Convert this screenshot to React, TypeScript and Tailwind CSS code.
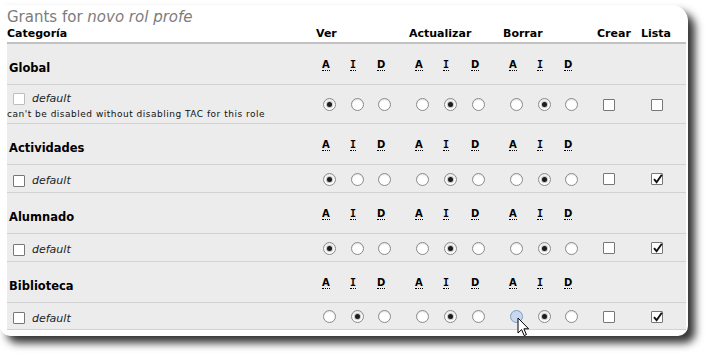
import React from "react";

const cols =
  "grid grid-cols-[309px_28px_27px_38px_28px_28px_38px_28px_27px_39px_44px_45px]";

function Radio({ checked, hover }: { checked?: boolean; hover?: boolean }) {
  return (
    <span
      className={
        "flex w-[13px] h-[13px] rounded-full border items-center justify-center " +
        (hover
          ? "border-[#7f9cc4] bg-[#c8d9ef]"
          : "border-[#8a8a8a] bg-white shadow-[inset_0_1px_1px_rgba(0,0,0,0.12)]")
      }
    >
      {checked && <span className="block w-[5px] h-[5px] rounded-full bg-[#1c1c1c] shadow-[0_0_1px_1px_rgba(0,0,0,0.25)]" />}
    </span>
  );
}

function Check({ checked, disabled }: { checked?: boolean; disabled?: boolean }) {
  return (
    <span
      className={
        "relative block w-[12px] h-[12px] rounded-[1px] border bg-white " +
        (disabled ? "border-[#bdbdbd]" : "border-[#777777]")
      }
    >
      {checked && (
        <svg className="absolute left-[0px] top-[-1px]" width="12" height="12" viewBox="0 0 12 12">
          <path d="M2 6.2 L4.6 9.2 L9.8 1.8" fill="none" stroke="#111" strokeWidth="1.9" />
        </svg>
      )}
    </span>
  );
}

function Letter({ c }: { c: string }) {
  return (
    <div className="flex items-start pl-[6px] pt-[15px]">
      <span
        className={
          "block font-bold text-[10px] leading-[11px] text-black border-b border-dotted border-black " +
          (c === "I" ? "font-['DejaVu_Sans_Mono',monospace] w-[6px] overflow-hidden flex justify-center" : "")
        }
      >
        {c}
      </span>
    </div>
  );
}

type Row = {
  name: string;
  ver: number;
  act: number;
  bor: number;
  lista: boolean;
  note?: boolean;
  hover?: number;
  last?: boolean;
};

const rows: Row[] = [
  { name: "Global", ver: 0, act: 1, bor: 1, lista: false, note: true },
  { name: "Actividades", ver: 0, act: 1, bor: 1, lista: true },
  { name: "Alumnado", ver: 0, act: 1, bor: 1, lista: true },
  { name: "Biblioteca", ver: 1, act: 1, bor: 1, lista: true, hover: 0, last: true },
];

function Group({ sel, hover }: { sel: number; hover?: number }) {
  return (
    <>
      {[0, 1, 2].map((i) => (
        <div key={i} className="flex items-center pl-[7px] pt-[1px]">
          <Radio checked={sel === i} hover={hover === i} />
        </div>
      ))}
    </>
  );
}

export default function App() {
  return (
    <div className="w-[712px] h-[360px] bg-white relative overflow-hidden font-['DejaVu_Sans',sans-serif]">
      <div className="relative w-[688px] h-[331px] mt-[5px] bg-white rounded-tr-[16px] rounded-b-[10px] shadow-[7px_7px_9px_rgba(0,0,0,0.8)] pl-[7px] pr-[2px] pt-[4px]">
        <div className="text-[15px] leading-[17px] text-[#7c7c7c] whitespace-nowrap">
          Grants for <i>novo rol profe</i>
        </div>
        <div className={cols + " text-[11px] leading-[13px] font-bold text-black border-b-2 border-[#c2c2c2] pt-[1px] pb-[2px]"}>
          <div>Categoría</div>
          <div className="col-span-3">Ver</div>
          <div className="col-span-3">Actualizar</div>
          <div className="col-span-3">Borrar</div>
          <div>Crear</div>
          <div>Lista</div>
        </div>
        <div className="bg-[#ececec]">
          {rows.map((r) => (
            <React.Fragment key={r.name}>
              <div className={cols + " h-[41px] border-b border-[#d2d2d2]"}>
                <div className="pl-[2px] pt-[17px] text-[11.5px] leading-[14px] font-bold text-black">{r.name}</div>
                {["A", "I", "D", "A", "I", "D", "A", "I", "D"].map((c, i) => (
                  <Letter key={i} c={c} />
                ))}
                <div />
                <div />
              </div>
              <div
                className={
                  cols +
                  (r.note ? " h-[39px]" : r.last ? " h-[27px]" : " h-[28px]") +
                  " border-b border-[#d2d2d2]"
                }
              >
                <div className={"flex flex-col pl-[6px] " + (r.note ? "pt-[7px]" : "justify-center pt-[4px]")}>
                  <div className="flex items-center">
                    <Check disabled={r.note} />
                    <span className="ml-[7px] italic text-[11px] leading-[13px] text-[#222]">default</span>
                  </div>
                  {r.note && (
                    <div className="-ml-[6px] mt-[4px] text-[9px] leading-[11px] tracking-[0.5px] text-[#111] whitespace-nowrap">
                      can't be disabled without disabling TAC for this role
                    </div>
                  )}
                </div>
                <Group sel={r.ver} />
                <Group sel={r.act} />
                <Group sel={r.bor} hover={r.hover} />
                <div className="flex items-center pl-[6px] pt-[1px]">
                  <Check />
                </div>
                <div className="flex items-center pl-[10px] pt-[1px]">
                  <Check checked={r.lista} />
                </div>
              </div>
            </React.Fragment>
          ))}
        </div>
      </div>
      <svg className="absolute left-[517px] top-[317px]" width="14" height="21" viewBox="0 0 14 21">
        <path d="M1 1 L1 16 L4.6 12.6 L7.2 18.6 L9.4 17.6 L6.9 11.8 L11.6 11.8 Z" fill="#fff" stroke="#000" strokeWidth="1" strokeLinejoin="round" />
      </svg>
    </div>
  );
}
